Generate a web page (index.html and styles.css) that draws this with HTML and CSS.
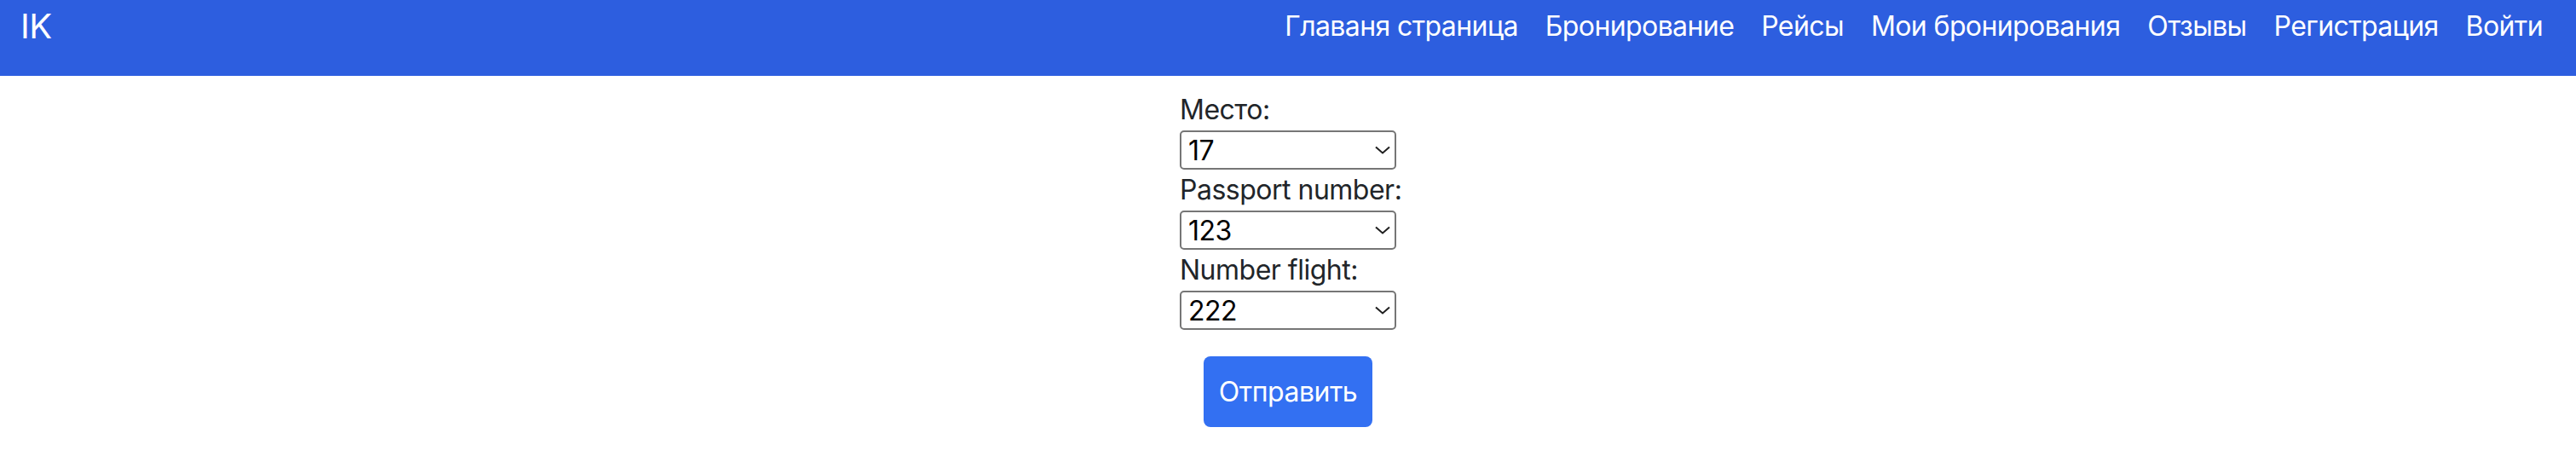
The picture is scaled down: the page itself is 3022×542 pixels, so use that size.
FILE: index.html
```html
<!DOCTYPE html>
<html lang="ru">
<head>
<meta charset="utf-8">
<title>IK</title>
<link rel="stylesheet" href="styles.css">
</head>
<body>
<nav class="navbar">
  <div class="nav-row">
    <a class="brand" href="#">IK</a>
    <ul class="links">
      <li><a href="#">Главаня страница</a></li>
      <li><a href="#">Бронирование</a></li>
      <li><a href="#">Рейсы</a></li>
      <li><a href="#">Мои бронирования</a></li>
      <li><a href="#">Отзывы</a></li>
      <li><a href="#">Регистрация</a></li>
      <li><a href="#">Войти</a></li>
    </ul>
  </div>
</nav>
<main class="page">
  <form class="booking">
    <label class="label" for="seat">Место:</label>
    <div class="select-wrap">
      <select id="seat" class="select"><option>17</option></select>
      <svg class="chev" width="18" height="10" viewBox="0 0 18 10"><path d="M1 1.5 L9 8.5 L17 1.5" fill="none" stroke="#1f1f1f" stroke-width="2"/></svg>
    </div>
    <label class="label" for="passport">Passport number:</label>
    <div class="select-wrap">
      <select id="passport" class="select"><option>123</option></select>
      <svg class="chev" width="18" height="10" viewBox="0 0 18 10"><path d="M1 1.5 L9 8.5 L17 1.5" fill="none" stroke="#1f1f1f" stroke-width="2"/></svg>
    </div>
    <label class="label" for="flight">Number flight:</label>
    <div class="select-wrap">
      <select id="flight" class="select"><option>222</option></select>
      <svg class="chev" width="18" height="10" viewBox="0 0 18 10"><path d="M1 1.5 L9 8.5 L17 1.5" fill="none" stroke="#1f1f1f" stroke-width="2"/></svg>
    </div>
    <div class="actions">
      <button type="submit" class="btn">Отправить</button>
    </div>
  </form>
</main>
</body>
</html>
```
FILE: styles.css
```css
* { box-sizing: border-box; }
html, body { margin: 0; padding: 0; background: #fff; }
body {
  font-family: Inter, "Liberation Sans", sans-serif;
  color: #212529;
}
.navbar {
  height: 89px;
  background: #2d5edf;
  padding: 0 23px 0 24px;
}
.nav-row {
  height: 62px;
  display: flex;
  align-items: center;
  justify-content: space-between;
}
.brand {
  color: #fff;
  text-decoration: none;
  font-size: 40px;
  line-height: 60px;
  letter-spacing: -0.5px;
}
.links {
  list-style: none;
  margin: 0;
  padding: 0;
  display: flex;
}
.links a {
  display: block;
  padding: 0 16px;
  color: #fff;
  text-decoration: none;
  font-size: 32px;
  line-height: 48px;
  letter-spacing: -0.6px;
}
.page {
  display: flex;
  justify-content: center;
  padding-top: 16px;
}
.booking {
  width: 254px;
  display: flex;
  flex-direction: column;
}
.label {
  font-size: 32px;
  line-height: 48px;
  letter-spacing: -0.5px;
  white-space: nowrap;
}
.select-wrap {
  position: relative;
  height: 46px;
}
.select {
  appearance: none;
  -webkit-appearance: none;
  width: 254px;
  height: 46px;
  margin: 0;
  padding: 0 30px 0 8px;
  border: 2px solid #767676;
  border-radius: 5px;
  background: #fff;
  color: #000;
  font-family: Inter, "Liberation Sans", sans-serif;
  font-size: 32px;
  letter-spacing: -0.5px;
}
.chev {
  position: absolute;
  left: 229px;
  top: 18px;
  pointer-events: none;
}
.actions {
  display: flex;
  justify-content: center;
  margin-top: 31px;
}
.btn {
  width: 198px;
  height: 83px;
  border: none;
  border-radius: 8px;
  background: #3370f2;
  color: #fff;
  font-family: Inter, "Liberation Sans", sans-serif;
  font-size: 32px;
  letter-spacing: -0.5px;
  padding: 0;
}
```
